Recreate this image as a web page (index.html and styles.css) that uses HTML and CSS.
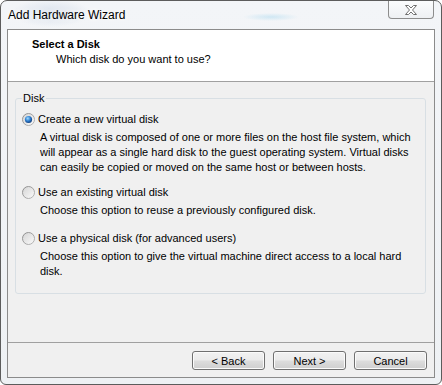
FILE: index.html
```html
<!DOCTYPE html>
<html>
<head>
<meta charset="utf-8">
<link rel="stylesheet" href="styles.css">
</head>
<body>
<div class="window">
  <div class="titlebar">
    <span class="title">Add Hardware Wizard</span>
    <div class="close">
      <svg width="12" height="10" viewBox="0 0 12 10"><path d="M0.5,0.5 H3.5 L6,3 L8.5,0.5 H11.5 L7.5,5 L11.5,9.5 H8.5 L6,7 L3.5,9.5 H0.5 L4.5,5 Z" fill="#ffffff" stroke="#6f6f6f" stroke-width="1" stroke-linejoin="round"/></svg>
    </div>
  </div>
  <div class="client">
    <div class="header">
      <div class="h-title">Select a Disk</div>
      <div class="h-sub">Which disk do you want to use?</div>
    </div>
    <div class="main">
      <fieldset class="group">
        <legend>Disk</legend>
        <div class="option">
          <div class="opt-label">
            <svg class="radio" width="13" height="13" viewBox="0 0 13 13">
              <defs>
                <linearGradient id="rfill" x1="0" y1="0" x2="1" y2="1">
                  <stop offset="0" stop-color="#d4d4d4"/>
                  <stop offset="1" stop-color="#fbfbfb"/>
                </linearGradient>
                <linearGradient id="rring" x1="0" y1="0" x2="1" y2="1">
                  <stop offset="0" stop-color="#8a8a8a"/>
                  <stop offset="1" stop-color="#b9b9b9"/>
                </linearGradient>
                <radialGradient id="rdot" cx="0.4" cy="0.35" r="0.65">
                  <stop offset="0" stop-color="#9fdcff"/>
                  <stop offset="0.55" stop-color="#2f7fd0"/>
                  <stop offset="1" stop-color="#123f7e"/>
                </radialGradient>
              </defs>
              <circle cx="6.5" cy="6.5" r="6" fill="url(#rfill)" stroke="url(#rring)"/>
              <circle cx="6.5" cy="6.5" r="3.6" fill="url(#rdot)"/>
            </svg>
            <span>Create a new virtual disk</span>
          </div>
          <div class="opt-desc">A virtual disk is composed of one or more files on the host file system, which<br>will appear as a single hard disk to the guest operating system. Virtual disks<br>can easily be copied or moved on the same host or between hosts.</div>
        </div>
        <div class="option opt2">
          <div class="opt-label">
            <svg class="radio" width="13" height="13" viewBox="0 0 13 13">
              <circle cx="6.5" cy="6.5" r="6" fill="url(#rfill)" stroke="url(#rring)"/>
            </svg>
            <span>Use an existing virtual disk</span>
          </div>
          <div class="opt-desc">Choose this option to reuse a previously configured disk.</div>
        </div>
        <div class="option opt3">
          <div class="opt-label">
            <svg class="radio" width="13" height="13" viewBox="0 0 13 13">
              <circle cx="6.5" cy="6.5" r="6" fill="url(#rfill)" stroke="url(#rring)"/>
            </svg>
            <span>Use a physical disk (for advanced users)</span>
          </div>
          <div class="opt-desc">Choose this option to give the virtual machine direct access to a local hard<br>disk.</div>
        </div>
      </fieldset>
    </div>
    <div class="footer">
      <button class="btn">&lt; Back</button>
      <button class="btn">Next &gt;</button>
      <button class="btn">Cancel</button>
    </div>
  </div>
</div>
</body>
</html>
```

FILE: styles.css
```css
html, body {
  margin: 0;
  padding: 0;
  background: #ffffff;
}

.window {
  width: 442px;
  height: 385px;
  box-sizing: border-box;
  border: 1px solid #5c5c5c;
  border-radius: 7px 7px 6px 6px;
  padding: 0 6px 6px 6px;
  display: flex;
  flex-direction: column;
  overflow: hidden;
  background:
    radial-gradient(ellipse 28px 4px at 270px 16px, rgba(140, 205, 235, 0.35), rgba(140, 205, 235, 0) 100%),
    radial-gradient(ellipse 40px 14px at 50px 12px, rgba(190, 205, 225, 0.5), rgba(190, 205, 225, 0) 100%),
    linear-gradient(#f3f5f8, #eef1f4);
  font-family: "Liberation Sans", Arial, sans-serif;
  font-size: 11px;
  color: #000;
}

.titlebar {
  height: 28px;
  flex: none;
  display: flex;
  justify-content: space-between;
  align-items: flex-start;
}

.title {
  margin: 6px 0 0 1px;
  font-size: 12px;
  line-height: 16px;
  text-shadow: 0 0 6px #ffffff, 0 0 10px #ffffff;
}

.close {
  width: 46px;
  height: 18px;
  box-sizing: border-box;
  margin-right: 1px;
  border: 1px solid #8d8d8d;
  border-top: none;
  border-radius: 0 0 4px 4px;
  background: linear-gradient(#fbfcfd, #eef0f3);
  display: flex;
  align-items: center;
  justify-content: center;
  padding-top: 1px;
}

.client {
  flex: 1;
  border: 1px solid #8b8b8b;
  background: #f0f0f0;
  display: flex;
  flex-direction: column;
}

.header {
  height: 52px;
  flex: none;
  box-sizing: border-box;
  background: #ffffff;
  border-bottom: 1px solid #a0a0a0;
  padding: 7px 0 0 24px;
  line-height: 15px;
}

.h-title {
  font-weight: bold;
}

.h-sub {
  padding-left: 24px;
}

.main {
  flex: 1;
  padding: 10px 8px 0 7px;
}

.group {
  margin: 0;
  border: 1px solid #d8dfe4;
  border-radius: 3px;
  padding: 7px 0 14px 6px;
  min-inline-size: 0;
}

.group legend {
  padding: 0 2px 0 1px;
  line-height: 13px;
}

.option {
  line-height: 15px;
}

.opt2 {
  margin-top: 10px;
}

.opt3 {
  margin-top: 13px;
}

.opt-label {
  display: flex;
  align-items: center;
  gap: 3px;
}

.radio {
  flex: none;
}

.opt-desc {
  margin: 3px 0 0 18px;
  white-space: nowrap;
}

.footer {
  flex: none;
  border-top: 1px solid #a0a0a0;
  padding: 8px 7px 7px 0;
  display: flex;
  justify-content: flex-end;
  gap: 8px;
}

.btn {
  width: 73px;
  height: 19px;
  padding: 0;
  margin: 0;
  font-family: "Liberation Sans", Arial, sans-serif;
  font-size: 11px;
  color: #000;
  border: 1px solid #707070;
  border-radius: 3px;
  background: linear-gradient(#f2f2f2 0%, #ebebeb 48%, #dddddd 52%, #cfcfcf 100%);
  box-shadow: inset 0 0 0 1px #fbfbfb;
}
```
